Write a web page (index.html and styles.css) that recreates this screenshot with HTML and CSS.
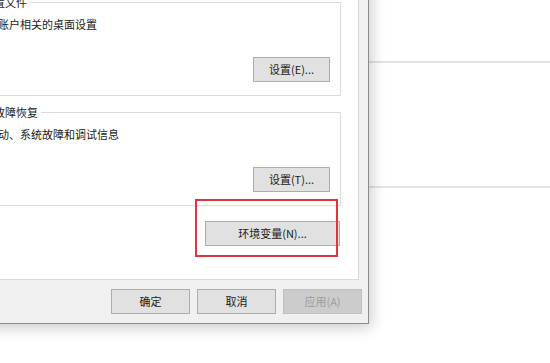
FILE: index.html
```html
<!DOCTYPE html>
<html lang="zh-CN">
<head>
<meta charset="utf-8">
<title>系统属性</title>
<link rel="stylesheet" href="styles.css">
</head>
<body>
<div class="dialog">
  <div class="page">
    <fieldset class="group">
      <legend>用户配置文件</legend>
      <p class="desc">与登录账户相关的桌面设置</p>
      <div class="actions"><button class="btn">设置(E)...</button></div>
    </fieldset>
    <fieldset class="group second">
      <legend>启动和故障恢复</legend>
      <p class="desc">系统启动、系统故障和调试信息</p>
      <div class="actions"><button class="btn">设置(T)...</button></div>
    </fieldset>
    <div class="env-row">
      <div class="highlight"><button class="btn env">环境变量(N)...</button></div>
    </div>
  </div>
  <div class="footer">
    <button class="btn wide">确定</button>
    <button class="btn wide">取消</button>
    <button class="btn wide" disabled>应用(A)</button>
  </div>
</div>
<div class="backdrop">
  <div class="bg-row first"></div>
  <div class="bg-row second"></div>
</div>
</body>
</html>
```

FILE: styles.css
```css
html, body {
  margin: 0;
  padding: 0;
}
body {
  width: 550px;
  height: 363px;
  overflow: hidden;
  background: #ffffff;
  display: flex;
  align-items: flex-start;
  font-family: "Noto Sans CJK SC", "Noto Sans", sans-serif;
  font-size: 11px;
  color: #1a1a1a;
}
.dialog {
  position: relative;
  z-index: 1;
  box-sizing: border-box;
  flex: none;
  width: 442px;
  margin-left: -73px;
  margin-top: -30px;
  background: #f0f0f0;
  border: 1px solid #8c8c8c;
  padding: 9px 9px 9px 9px;
  box-shadow: 2px 3px 14px rgba(0, 0, 0, 0.22);
}
.page {
  background: #ffffff;
  border: 1px solid #d9d9d9;
  padding: 13px 17px 33px 17px;
}
.group {
  margin: 0;
  border: 1px solid #dcdcdc;
  padding: 6px 10px 13px 9px;
}
.group.second {
  margin-top: 8px;
}
.group legend {
  padding: 0 3px 0 2px;
  margin-left: -6px;
  line-height: 16px;
  height: 16px;
}
.desc {
  margin: 0;
  line-height: 16px;
  height: 16px;
}
.actions {
  display: flex;
  justify-content: flex-end;
  margin-top: 25px;
}
.btn {
  box-sizing: border-box;
  width: 77px;
  height: 25px;
  margin: 0;
  padding: 0;
  background: #e1e1e1;
  border: 1px solid #adadad;
  border-radius: 0;
  font-family: inherit;
  font-size: 11px;
  color: #1a1a1a;
  line-height: 23px;
}
.btn:disabled {
  background: #cccccc;
  border-color: #bfbfbf;
  color: #9c9c9c;
}
.env-row {
  display: flex;
  justify-content: flex-end;
  margin-top: 15px;
  margin-right: 1px;
}
.highlight {
  position: relative;
}
.highlight::after {
  content: "";
  position: absolute;
  left: -10px;
  right: 2px;
  top: -22px;
  bottom: -11px;
  border: 2px solid #e0353c;
  pointer-events: none;
}
.btn.env {
  width: 135px;
}
.footer {
  display: flex;
  justify-content: flex-end;
  gap: 7px;
  margin-top: 9px;
  margin-right: -3px;
}
.btn.wide {
  width: 79px;
}
.backdrop {
  flex: 1;
  display: flex;
  flex-direction: column;
}
.bg-row {
  border-bottom: 2px solid #e4e4e4;
}
.bg-row.first {
  height: 61px;
}
.bg-row.second {
  height: 123px;
}
```
